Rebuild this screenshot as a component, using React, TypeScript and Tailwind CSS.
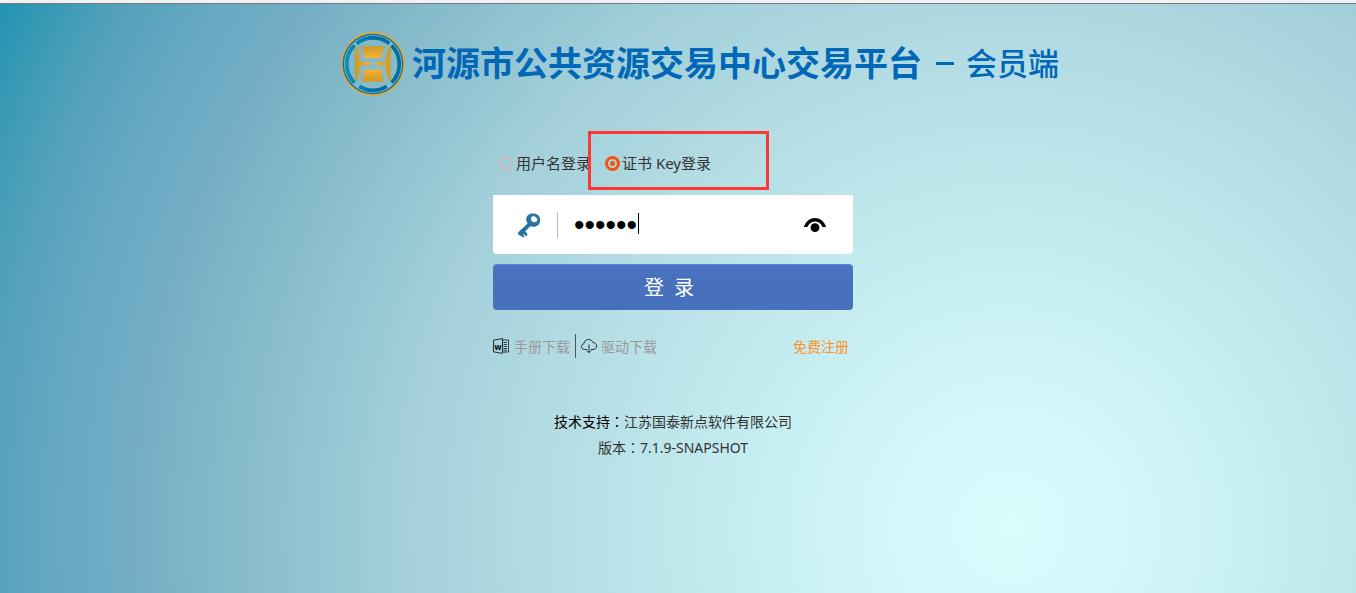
import { useState } from "react";

function Logo() {
  return (
    <svg viewBox="0 0 64 64" className="size-16 shrink-0" aria-hidden="true">
      <defs>
        <linearGradient id="goldTop" x1="0" y1="0" x2="0" y2="1">
          <stop offset="0" stopColor="#cb9b27" />
          <stop offset="1" stopColor="#fbb133" />
        </linearGradient>
        <linearGradient id="goldBottom" x1="0" y1="0" x2="0" y2="1">
          <stop offset="0" stopColor="#f9b033" />
          <stop offset="1" stopColor="#cb9b27" />
        </linearGradient>
        <linearGradient id="goldSide" x1="0" y1="0" x2="1" y2="0">
          <stop offset="0" stopColor="#c99d2f" />
          <stop offset="0.500" stopColor="#fbb133" />
          <stop offset="1" stopColor="#c99d2f" />
        </linearGradient>
        <linearGradient id="teal" gradientUnits="userSpaceOnUse" x1="4" y1="0" x2="30" y2="0">
          <stop offset="0" stopColor="#0594bd" />
          <stop offset="1" stopColor="#06709c" />
        </linearGradient>
      </defs>
      <circle cx="32" cy="32" r="31.200" fill="none" stroke="#eaaa22" strokeWidth="1.500" />
      <circle cx="32" cy="32" r="29.700" fill="none" stroke="#1b6a98" strokeWidth="1.300" />
      <g fill="none" stroke="url(#teal)" strokeWidth="3.800">
        <path d="M15.600 11.500A26.300 26.300 0 0 1 48.400 11.500" />
        <path d="M50.500 13.300A26.300 26.300 0 0 1 50.500 50.700" />
        <path d="M45.800 54.400A26.300 26.300 0 0 1 18.200 54.400" />
        <path d="M13.500 50.700A26.300 26.300 0 0 1 13.500 13.300" />
      </g>
      <path d="M19.700 14.300H44C42 18 41 21.500 40.200 26H23.600C23 21.500 22 18 19.700 14.300Z" fill="url(#goldTop)" />
      <path d="M23.600 37.500H40.200C40.700 42 41.500 46 43 49.700H20.700C22.300 46 23.100 42 23.600 37.500Z" fill="url(#goldBottom)" />
      <path
        d="M14 14.500L15 13.500C18 18 19.500 23.500 19.700 29.800H29.300V33.400H19.700C19.500 39 18.500 44.500 15.300 49.500L14 48.500ZM49.700 14.500L48.500 13.500C46 18 44.500 23.500 44.300 29.800H34.700V33.400H44.300C44.500 39 45.500 44.500 48.500 49.500L49.700 48.500Z"
        fill="url(#goldSide)"
      />
    </svg>
  );
}

function KeyIcon() {
  return (
    <svg viewBox="0 0 24 26" className="h-[26px] w-6 shrink-0" aria-hidden="true">
      <path
        fillRule="evenodd"
        fill="#2a73a0"
        d="M14.500 1.500C19.500 .8 23.300 3.500 23.300 8C23.300 12.500 19.500 15.300 15.500 14.800L13.300 14.200L8.200 19.600L10.800 22.200L8.900 24.200L6.900 22.200L6.100 23L7.600 24.500L6.200 25.500L1 22.200V20.500L10.600 11.500L9.600 9.500C8.300 5.500 10.500 2 14.500 1.500ZM15 4.600C13.400 6 13.600 8 15 9.300C16.500 10.600 18.700 10.600 19.800 9.300C20.900 7.800 20.200 5.900 18.700 4.900C17.400 4.100 16 3.900 15 4.600Z"
      />
    </svg>
  );
}

function EyeIcon() {
  return (
    <svg viewBox="0 0 24 16" className="h-4 w-6" aria-hidden="true">
      <path d="M.8 10C5 -2 19 -2 23.200 10H19.600C16 2.800 8 2.800 4.400 10Z" fill="#000" />
      <circle cx="12" cy="10.600" r="4.400" fill="#000" />
    </svg>
  );
}

function WordIcon() {
  return (
    <svg viewBox="0 0 16 16" className="size-4 shrink-0" aria-hidden="true">
      <path d="M.5 2.200L9.500 .6V15.400L.5 13.800Z" fill="none" stroke="#222e33" />
      <path d="M9.500 2H15.500V14H9.500M10.500 4.500H14M10.500 6.500H14M10.500 8.500H14M10.500 10.500H14M10.500 12.200H14" fill="none" stroke="#222e33" strokeWidth=".9" />
      <text x="5" y="11.500" textAnchor="middle" fontFamily="DejaVu Sans Condensed, Liberation Sans, sans-serif" fontWeight="700" fontSize="9" fill="#111">w</text>
    </svg>
  );
}

function CloudIcon() {
  return (
    <svg viewBox="0 0 16 16" className="size-4 shrink-0" aria-hidden="true" fill="none" stroke="#222e33">
      <path d="M6 11.500H3.500C1.700 11.500 .5 10.300 .5 8.600C.5 7.100 1.500 6.100 2.800 5.800C3 3.200 5 1.500 7.500 1.500C9.600 1.500 11.200 2.700 11.900 4.500C14 4.500 15.500 6 15.500 8C15.500 10 14 11.500 12 11.500H10" />
      <path d="M8 6.500V14.500M5.800 12.500L8 14.700L10.200 12.500" />
    </svg>
  );
}

const radioClass =
  "grid size-[15px] shrink-0 appearance-none place-content-center rounded-full border-3 border-[#bfc0c2] before:size-[5px] before:rounded-full checked:border-[#f4530f] checked:before:bg-[#f4530f]";

export default function App() {
  const [mode, setMode] = useState("key");
  const [pin, setPin] = useState("123456");
  const [visible, setVisible] = useState(false);

  return (
    <div className="flex min-h-screen flex-col bg-[radial-gradient(circle_at_74.5%_89%,#d8fdfd_0%,#d3f8f9_10%,#c9f0f3_20%,#bbe3e9_34%,#b0d9e1_44%,#a2cfd9_54%,#94c5d2_61%,#86bbcb_68%,#74aec4_77%,#66a8c1_84%,#50a0ba_91%,#2093b1_100%)] font-['Noto_Sans','Noto_Sans_CJK_SC',sans-serif] text-[#333]">
      <div className="h-1 border-b border-[#777d80] bg-[#f0f1f5]" />
      <header className="flex items-center justify-center pt-7 pl-11 text-[#0068b7]">
        <Logo />
        <h1 className="flex items-center pb-[2px] pl-[7px] leading-[48px] whitespace-nowrap">
          <span className="text-[34px] font-bold">河源市公共资源交易中心交易平台</span>
          <span className="ml-[14px] h-[3px] w-[18px] bg-[#0068b7]" />
          <span className="pl-3 text-[31px] font-medium">会员端</span>
        </h1>
      </header>

      <main className="flex flex-col items-center pt-[52px] pr-[10px]">
        <form className="w-[360px]" onSubmit={(e) => e.preventDefault()}>
          <div className="relative flex h-[47px] items-start pl-[5px] text-[15px] leading-[31px] whitespace-nowrap">
            <label className="flex items-center gap-[3px]">
              <input type="radio" name="mode" className={radioClass} checked={mode === "user"} onChange={() => setMode("user")} />
              用户名登录
            </label>
            <label className="ml-[14px] flex items-center gap-[2px]">
              <input type="radio" name="mode" className={radioClass} checked={mode === "key"} onChange={() => setMode("key")} />
              证书 Key登录
            </label>
            <div className="pointer-events-none absolute -top-[17px] left-[95px] h-[59px] w-[181px] border-3 border-[#fb3836]" />
          </div>

          <div className="flex h-[59px] items-center rounded-b bg-white pr-[26px] pl-6">
            <KeyIcon />
            <div className="ml-4 h-[26px] w-px bg-[#bbb]" />
            <div className="relative ml-4 min-w-0 flex-1">
              <input
                type={visible ? "text" : "password"}
                aria-label="PIN"
                value={pin}
                onChange={(e) => setPin(e.target.value)}
                className="block h-8 w-full bg-transparent font-['Liberation_Sans',sans-serif] text-[30px] text-black outline-none"
              />
              <span className="absolute top-1 left-16 h-[21px] w-px bg-black" />
            </div>
            <button type="button" aria-label="显示密码" onClick={() => setVisible(!visible)}>
              <EyeIcon />
            </button>
          </div>

          <button
            type="submit"
            className="mt-[10px] block h-[46px] w-full rounded border-t border-[#5a86d6] bg-linear-to-b from-[#4a75c4] to-[#4770bd] to-30% pr-2 text-[20px] text-white"
          >
            登&ensp;录
          </button>

          <div className="mt-6 flex h-6 items-center text-[14px] whitespace-nowrap text-[#999]">
            <a href="#manual" className="flex items-center gap-[5px]">
              <WordIcon />
              手册下载
            </a>
            <div className="mx-[5px] h-6 w-px bg-[#555]" />
            <a href="#driver" className="flex items-center gap-1">
              <CloudIcon />
              驱动下载
            </a>
            <a href="#register" className="mr-1 ml-auto text-[#ff9326]">免费注册</a>
          </div>
        </form>

        <footer className="mt-[51px] text-center text-[14px] leading-[26px]">
          <p>
            <span className="text-black">
              技术支持<span className="font-['Noto_Sans_CJK_TC',sans-serif] leading-none">：</span>
            </span>
            <a href="#company">江苏国泰新点软件有限公司</a>
          </p>
          <p>
            版本<span className="font-['Noto_Sans_CJK_TC',sans-serif] leading-none">：</span>7.1.9-SNAPSHOT
          </p>
        </footer>
      </main>
    </div>
  );
}
